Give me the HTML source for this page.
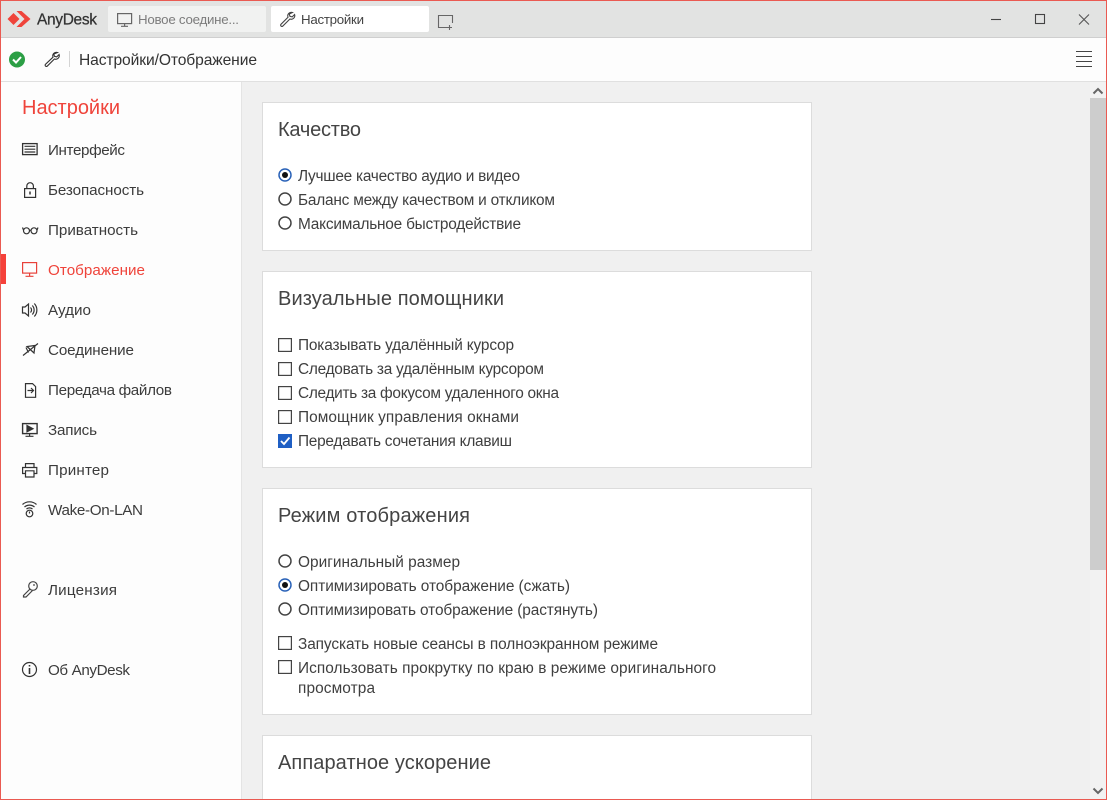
<!DOCTYPE html>
<html lang="ru"><head><meta charset="utf-8"><title>AnyDesk</title>
<style>
html,body{margin:0;padding:0;width:1107px;height:800px;overflow:hidden;background:#fff}
svg{display:block;font-family:"Liberation Sans",sans-serif}
.o{font-size:15.4px;fill:#3f3f3f}
.n{font-size:15.2px;fill:#3c3c3c}
.h{font-size:20px;fill:#444}
.ic{fill:none;stroke:#333;stroke-width:1.2}
.r{fill:#fff;stroke:#444;stroke-width:1.5}
.c{fill:#fff;stroke:#444;stroke-width:1.2}
.card{fill:#fff;stroke:#dcdcdc;stroke-width:1}
</style></head><body>
<svg width="1107" height="800" viewBox="0 0 1107 800" xmlns="http://www.w3.org/2000/svg">
<rect width="1107" height="800" fill="#fdfdfd"/>
<rect x="0" y="0" width="1107" height="38" fill="#e2e3e2"/>
<rect x="0" y="37" width="1107" height="1" fill="#cfcfcf"/>
<rect x="242" y="82" width="865" height="718" fill="#f0f0f0"/>
<rect x="0" y="81" width="1107" height="1" fill="#e0e0e0"/>
<rect x="241" y="82" width="1" height="718" fill="#e4e4e4"/>
<rect x="1090" y="82" width="17" height="718" fill="#f2f2f2"/>
<rect x="1090" y="98" width="16" height="472" fill="#cdcdcd"/>
<path d="M1093.500 93.500L1098 89L1102.500 93.500" fill="none" stroke="#666" stroke-width="2"/>
<path d="M1093.500 788.500L1098 793L1102.500 788.500" fill="none" stroke="#666" stroke-width="2"/>

<!-- title bar -->
<path d="M7.500 19L13.500 13L19.500 19L13.500 25Z" fill="#ef443b"/>
<path d="M16.500 11H21.500L30.500 19L21.500 27H16.500L24.500 19Z" fill="#ef443b"/>
<text x="37" y="24.500" font-size="15.500" fill="#333" stroke="#333" stroke-width=".25" textLength="60">AnyDesk</text>
<rect x="108" y="6" width="158" height="26" rx="2" fill="#f1f2f1"/>
<rect x="271" y="6" width="158" height="26" rx="2" fill="#fff"/>
<g fill="none" stroke="#666" stroke-width="1.200"><rect x="117.600" y="13.600" width="14" height="10"/><path d="M124.600 23.600V26M121 26.300H128"/></g>
<text x="138" y="24" font-size="13.300" fill="#7c7c7c" textLength="101">Новое соедине...</text>
<path d="M292.500 12.500a3.600 3.600 0 0 0-4.500 4.700L280.800 24.500a1.300 1.300 0 0 0 0 1.300l.5.500a1.300 1.300 0 0 0 1.300 0l7.300-7.300a3.600 3.600 0 0 0 4.700-4.500l-2.400 2.400l-2.300-.6l-.6-2.300z" fill="none" stroke="#444" stroke-width="1.100"/>
<text x="301" y="24" font-size="13.300" fill="#444" textLength="63">Настройки</text>
<g fill="none" stroke="#666" stroke-width="1.100"><path d="M447 27.500H438.500V15.500H452.500V23"/><path d="M441 27.500H445M449.500 25V30M447 27.500H452"/></g>
<path d="M991 19.500H1001" stroke="#444" stroke-width="1.100"/>
<rect x="1035.500" y="14.500" width="9" height="9" fill="none" stroke="#444" stroke-width="1.100"/>
<path d="M1079 14.500L1089 24.500M1089 14.500L1079 24.500" stroke="#555" stroke-width="1.100"/>

<!-- toolbar -->
<circle cx="17" cy="59.500" r="8" fill="#2c9f45"/>
<path d="M13 59.500L16 62.500L21 57" fill="none" stroke="#fff" stroke-width="2"/>
<path d="M57.500 52.500a3.600 3.600 0 0 0-4.500 4.700L45.300 64.500a1.300 1.300 0 0 0 0 1.300l.5.500a1.300 1.300 0 0 0 1.300 0l7.300-7.300a3.600 3.600 0 0 0 4.700-4.500l-2.400 2.400l-2.300-.6l-.6-2.300z" fill="none" stroke="#333" stroke-width="1.100"/>
<rect x="69" y="51" width="1" height="16" fill="#d4d4d4"/>
<text x="79" y="65" font-size="15.600" fill="#333" textLength="178">Настройки/Отображение</text>
<path d="M1076 51.500H1092M1076 56.500H1092M1076 61.500H1092M1076 66.500H1092" stroke="#444" stroke-width="1"/>

<!-- sidebar -->
<text x="22" y="114" font-size="20" fill="#ef443b" textLength="98">Настройки</text>
<rect x="1" y="254" width="5" height="30" fill="#f5413a"/>

<g class="ic">
<rect x="22.600" y="143.600" width="14.500" height="11" stroke-width="1.300"/><path d="M24.500 146.300H35.300M24.500 149.200H35.300M24.500 152H35.300" stroke-width="1.200"/>
<rect x="24.600" y="188.600" width="11" height="8.800"/><path d="M26.800 188.500V186a3.300 3.300 0 0 1 6.600 0V188.500"/><path d="M30 191.500V194.500" stroke-width="1.500"/>
<circle cx="26.500" cy="230.800" r="3"/><circle cx="34" cy="230.800" r="3"/><path d="M29.500 230.300H31M23.500 230L22.500 227.500M37 230L38 227.500"/>
<g stroke="#e8413a"><rect x="22.600" y="262.600" width="14" height="10.500"/><path d="M29.600 273.200V276M25.500 276.300H33.500"/></g>
<path d="M22.500 307H25L28.500 304V316L25 313H22.500Z"/><path d="M30.500 307.500a3.500 3.500 0 0 1 0 5M32.300 305.500a6.500 6.500 0 0 1 0 9M34.300 303.500a9.500 9.500 0 0 1 0 13"/>
<path d="M23 355.500L38 343.500M27 346.500L34 353L35 345.500ZM26 347.500L28.500 352.500"/>
<path d="M25.500 383.600H32.500L35.600 386.600V397.300H25.500ZM27.500 390.500H33M31 388L33.500 390.500L31 393"/>
<rect x="22.600" y="423.600" width="14.500" height="10" stroke-width="1.400"/><path d="M29.600 433.700V436M25.500 436.300H33.500"/><path d="M27 425.500L33 428.700L27 431.800Z" fill="#333"/>
<path d="M25.500 467.500V463.600H34V467.500M25.500 473.500H22.600V467.500H36.800V473.500H34M25.500 470.800H34V477H25.500Z"/>
<path d="M22.500 504.500a10.500 10.500 0 0 1 14 0M24.500 507a7.500 7.500 0 0 1 10 0M26.500 509a4.500 4.500 0 0 1 6 0"/><circle cx="29.500" cy="513.500" r="3.300"/><path d="M29.500 511.500V513.500"/>
<circle cx="33" cy="586" r="4.300" stroke="#444"/><path d="M30 589L23.500 595.500V597H26L32.500 590.500" stroke="#444"/><circle cx="34" cy="585" r=".9" fill="#444" stroke="none"/>
<circle cx="29.500" cy="669.500" r="7"/><path d="M29.500 668V674" stroke-width="1.600"/><path d="M29.500 665V666.500" stroke-width="1.600"/>
</g>

<text class="n" x="48" y="155" textLength="77">Интерфейс</text>
<text class="n" x="48" y="195" textLength="96">Безопасность</text>
<text class="n" x="48" y="235" textLength="90">Приватность</text>
<text class="n" x="48" y="275" textLength="97" style="fill:#ef443b">Отображение</text>
<text class="n" x="48" y="315" textLength="43">Аудио</text>
<text class="n" x="48" y="355" textLength="86">Соединение</text>
<text class="n" x="48" y="395" textLength="124">Передача файлов</text>
<text class="n" x="48" y="435" textLength="49">Запись</text>
<text class="n" x="48" y="475" textLength="61">Принтер</text>
<text class="n" x="48" y="515" textLength="95">Wake-On-LAN</text>
<text class="n" x="48" y="595" textLength="69">Лицензия</text>
<text class="n" x="48" y="675" textLength="82">Об AnyDesk</text>

<!-- cards -->
<rect class="card" x="262.500" y="102.500" width="549" height="148"/>
<rect class="card" x="262.500" y="271.500" width="549" height="196"/>
<rect class="card" x="262.500" y="488.500" width="549" height="226"/>
<rect class="card" x="262.500" y="735.500" width="549" height="80"/>

<text class="h" x="278" y="136" textLength="83">Качество</text>
<text class="h" x="278" y="305" textLength="226">Визуальные помощники</text>
<text class="h" x="278" y="522" textLength="192">Режим отображения</text>
<text class="h" x="278" y="769" textLength="213">Аппаратное ускорение</text>

<circle cx="285" cy="175" r="6" fill="#fff" stroke="#2a62b8" stroke-width="1.500"/><circle cx="285" cy="175" r="3" fill="#111"/>
<circle class="r" cx="285" cy="199" r="6"/>
<circle class="r" cx="285" cy="223" r="6"/>
<text class="o" x="298" y="181" textLength="222">Лучшее качество аудио и видео</text>
<text class="o" x="298" y="205" textLength="257">Баланс между качеством и откликом</text>
<text class="o" x="298" y="229" textLength="223">Максимальное быстродействие</text>

<rect class="c" x="278.600" y="338.600" width="12.800" height="12.800"/>
<rect class="c" x="278.600" y="362.600" width="12.800" height="12.800"/>
<rect class="c" x="278.600" y="386.600" width="12.800" height="12.800"/>
<rect class="c" x="278.600" y="410.600" width="12.800" height="12.800"/>
<rect x="278" y="434" width="14" height="14" fill="#1f5fc4"/>
<path d="M281 441L284 444L289.500 437.500" fill="none" stroke="#fff" stroke-width="1.800"/>
<text class="o" x="298" y="350" textLength="216">Показывать удалённый курсор</text>
<text class="o" x="298" y="374" textLength="246">Следовать за удалённым курсором</text>
<text class="o" x="298" y="398" textLength="261">Следить за фокусом удаленного окна</text>
<text class="o" x="298" y="422" textLength="221">Помощник управления окнами</text>
<text class="o" x="298" y="446" textLength="214">Передавать сочетания клавиш</text>

<circle class="r" cx="285" cy="561" r="6"/>
<circle cx="285" cy="585" r="6" fill="#fff" stroke="#2a62b8" stroke-width="1.500"/><circle cx="285" cy="585" r="3" fill="#111"/>
<circle class="r" cx="285" cy="609" r="6"/>
<text class="o" x="298" y="567" textLength="162">Оригинальный размер</text>
<text class="o" x="298" y="591" textLength="272">Оптимизировать отображение (сжать)</text>
<text class="o" x="298" y="615" textLength="300">Оптимизировать отображение (растянуть)</text>
<rect class="c" x="278.600" y="636.600" width="12.800" height="12.800"/>
<rect class="c" x="278.600" y="660.600" width="12.800" height="12.800"/>
<text class="o" x="298" y="649" textLength="360">Запускать новые сеансы в полноэкранном режиме</text>
<text class="o" x="298" y="673" textLength="418">Использовать прокрутку по краю в режиме оригинального</text>
<text class="o" x="298" y="693" textLength="77">просмотра</text>

<!-- window frame -->
<rect x=".5" y=".5" width="1106" height="799" fill="none" stroke="#ea5a52" stroke-width="1"/>
</svg>
</body></html>
